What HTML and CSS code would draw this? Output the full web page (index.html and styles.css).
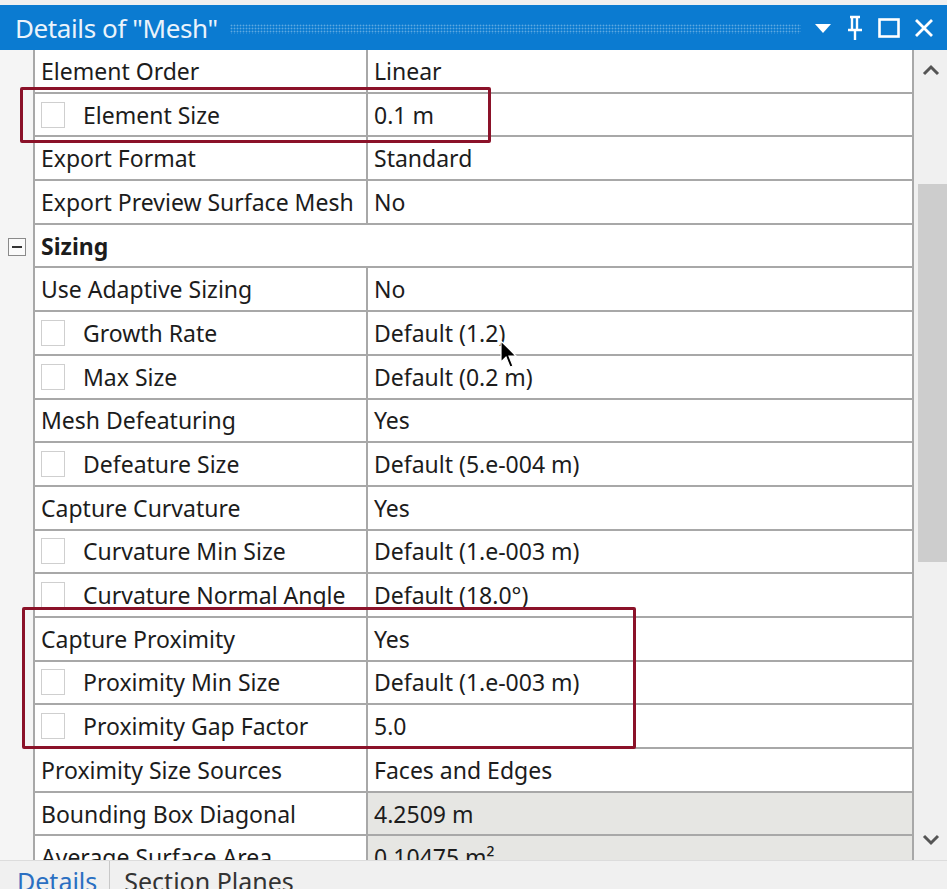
FILE: index.html
```html
<!DOCTYPE html>
<html>
<head>
<meta charset="utf-8">
<link rel="stylesheet" href="styles.css">
</head>
<body>
<div class="window">
  <div class="titlebar">
    <span class="title">Details of "Mesh"</span>
    <span class="dots"></span>
    <div class="tb-icons">
      <svg width="20" height="20" viewBox="0 0 20 20"><path d="M2 6 L18 6 L10 15 Z" fill="#fff"/></svg>
      <svg width="20" height="28" viewBox="0 0 20 28"><path d="M5 3 H15 M7 3 V16 M12 3 V16 M3 16 H17 M10 16 V26" stroke="#fff" stroke-width="2.4" fill="none"/></svg>
      <svg width="24" height="24" viewBox="0 0 24 24"><rect x="2.5" y="3.5" width="19" height="17" stroke="#fff" stroke-width="2.6" fill="none"/></svg>
      <svg width="22" height="22" viewBox="0 0 22 22"><path d="M3 3 L19 19 M19 3 L3 19" stroke="#fff" stroke-width="2.8"/></svg>
    </div>
  </div>
  <div class="body">
    <div class="grid">
      <div class="row"><div class="gut"></div><div class="name">Element Order</div><div class="val">Linear</div></div>
      <div class="row"><div class="gut"></div><div class="name"><span class="cb"></span>Element Size</div><div class="val">0.1 m</div></div>
      <div class="row"><div class="gut"></div><div class="name">Export Format</div><div class="val">Standard</div></div>
      <div class="row"><div class="gut"></div><div class="name">Export Preview Surface Mesh</div><div class="val">No</div></div>
      <div class="row group"><div class="gut"><span class="minus"></span></div><div class="name">Sizing</div></div>
      <div class="row"><div class="gut"></div><div class="name">Use Adaptive Sizing</div><div class="val">No</div></div>
      <div class="row"><div class="gut"></div><div class="name"><span class="cb"></span>Growth Rate</div><div class="val">Default (1.2)</div></div>
      <div class="row"><div class="gut"></div><div class="name"><span class="cb"></span>Max Size</div><div class="val">Default (0.2 m)</div></div>
      <div class="row"><div class="gut"></div><div class="name">Mesh Defeaturing</div><div class="val">Yes</div></div>
      <div class="row"><div class="gut"></div><div class="name"><span class="cb"></span>Defeature Size</div><div class="val">Default (5.e-004 m)</div></div>
      <div class="row"><div class="gut"></div><div class="name">Capture Curvature</div><div class="val">Yes</div></div>
      <div class="row"><div class="gut"></div><div class="name"><span class="cb"></span>Curvature Min Size</div><div class="val">Default (1.e-003 m)</div></div>
      <div class="row"><div class="gut"></div><div class="name"><span class="cb"></span>Curvature Normal Angle</div><div class="val">Default (18.0°)</div></div>
      <div class="row"><div class="gut"></div><div class="name">Capture Proximity</div><div class="val">Yes</div></div>
      <div class="row"><div class="gut"></div><div class="name"><span class="cb"></span>Proximity Min Size</div><div class="val">Default (1.e-003 m)</div></div>
      <div class="row"><div class="gut"></div><div class="name"><span class="cb"></span>Proximity Gap Factor</div><div class="val">5.0</div></div>
      <div class="row"><div class="gut"></div><div class="name">Proximity Size Sources</div><div class="val">Faces and Edges</div></div>
      <div class="row"><div class="gut"></div><div class="name">Bounding Box Diagonal</div><div class="val ro">4.2509 m</div></div>
      <div class="row"><div class="gut"></div><div class="name">Average Surface Area</div><div class="val ro">0.10475 m²</div></div>
    </div>
    <div class="scrollbar">
      <svg class="arrow" width="18" height="12" viewBox="0 0 18 12"><path d="M2 10 L9 3 L16 10" stroke="#555" stroke-width="3" fill="none"/></svg>
      <div class="track"><div class="thumb"></div></div>
      <svg class="arrow" width="18" height="12" viewBox="0 0 18 12"><path d="M2 2 L9 9 L16 2" stroke="#555" stroke-width="3" fill="none"/></svg>
    </div>
  </div>
  <div class="tabs">
    <span class="tab active">Details</span>
    <span class="tab">Section Planes</span>
  </div>
  <div class="hl hl1"></div>
  <div class="hl hl2"></div>
  <svg class="cursor" width="20" height="30" viewBox="0 0 20 30"><path d="M1 1 L1 22 L6 17 L10 27 L13 26 L9 16 L16 16 Z" fill="#000" stroke="#fff" stroke-width="1.2"/></svg>
</div>
</body>
</html>
```
FILE: styles.css
```css
html, body {
  margin: 0;
  padding: 0;
  background: #f0f0f0;
}
.window {
  position: relative;
  width: 947px;
  height: 889px;
  overflow: hidden;
  padding-top: 5px;
  box-sizing: border-box;
  font-family: "Noto Sans", "Open Sans", sans-serif;
  color: #1c1c1c;
}
.titlebar {
  height: 45px;
  background: #0b7bd1;
  display: flex;
  align-items: center;
  padding-left: 15px;
  padding-right: 12px;
}
.title {
  color: #eaf3fb;
  font-size: 26px;
  letter-spacing: -0.4px;
  white-space: nowrap;
}
.dots {
  flex: 1;
  height: 10px;
  margin: 2px 12px 0 12px;
  background-image: radial-gradient(circle, rgba(255,255,255,0.35) 0.8px, transparent 1.1px);
  background-size: 3px 3px;
}
.tb-icons {
  display: flex;
  align-items: center;
  gap: 12px;
}
.body {
  display: flex;
  height: 810px;
}
.grid {
  width: 914px;
  overflow: hidden;
  background: #f5f5f5;
}
.row {
  display: grid;
  grid-template-columns: 33px 333px 1fr;
  height: 43.7px;
  font-size: 23px;
}
.gut {
  background: #f5f5f5;
  display: flex;
  align-items: center;
  justify-content: center;
}
.name, .val {
  background: #fff;
  border-bottom: 2px solid #a8a8a8;
  border-left: 2px solid #a8a8a8;
  display: flex;
  align-items: center;
  padding-left: 6px;
  white-space: nowrap;
  overflow: hidden;
}
.val {
  border-right: 2px solid #a8a8a8;
}
.val.ro {
  background: #e6e6e3;
}
.group .name {
  grid-column: 2 / 4;
  font-weight: bold;
  border-right: 2px solid #a8a8a8;
}
.cb {
  display: inline-block;
  width: 22px;
  height: 24px;
  border: 1px solid #cfcfcf;
  background: #fff;
  margin-right: 18px;
  flex: none;
}
.minus {
  width: 16px;
  height: 16px;
  border: 1px solid #8a8a8a;
  background: #fafafa;
  position: relative;
}
.minus::after {
  content: "";
  position: absolute;
  left: 3px;
  right: 3px;
  top: 7px;
  height: 2px;
  background: #333;
}
.scrollbar {
  width: 33px;
  background: #f0f0f0;
  display: flex;
  flex-direction: column;
  align-items: center;
}
.scrollbar .arrow {
  margin: 14px 0;
}
.track {
  flex: 1;
  width: 100%;
  padding-top: 94px;
  padding-bottom: 258px;
  box-sizing: border-box;
  display: flex;
  justify-content: flex-end;
}
.thumb {
  width: 29px;
  background: #cdcdcd;
}
.tabs {
  height: 29px;
  border-top: 1px solid #dcdcdc;
  display: flex;
  align-items: flex-start;
  padding-left: 17px;
  font-size: 25px;
}
.tab {
  line-height: 1;
  padding-top: 8px;
  color: #333;
}
.tab.active {
  color: #2a6fc2;
  padding-right: 12px;
  margin-right: 14px;
  border-right: 1px solid #c8c8c8;
  height: 29px;
  box-sizing: border-box;
}
.hl {
  position: absolute;
  border: 3px solid #8b1229;
  border-radius: 2px;
}
.hl1 {
  left: 20px;
  top: 87px;
  width: 465px;
  height: 50px;
}
.hl2 {
  left: 22px;
  top: 607px;
  width: 608px;
  height: 136px;
}
.cursor {
  position: absolute;
  left: 500px;
  top: 340px;
}
```
